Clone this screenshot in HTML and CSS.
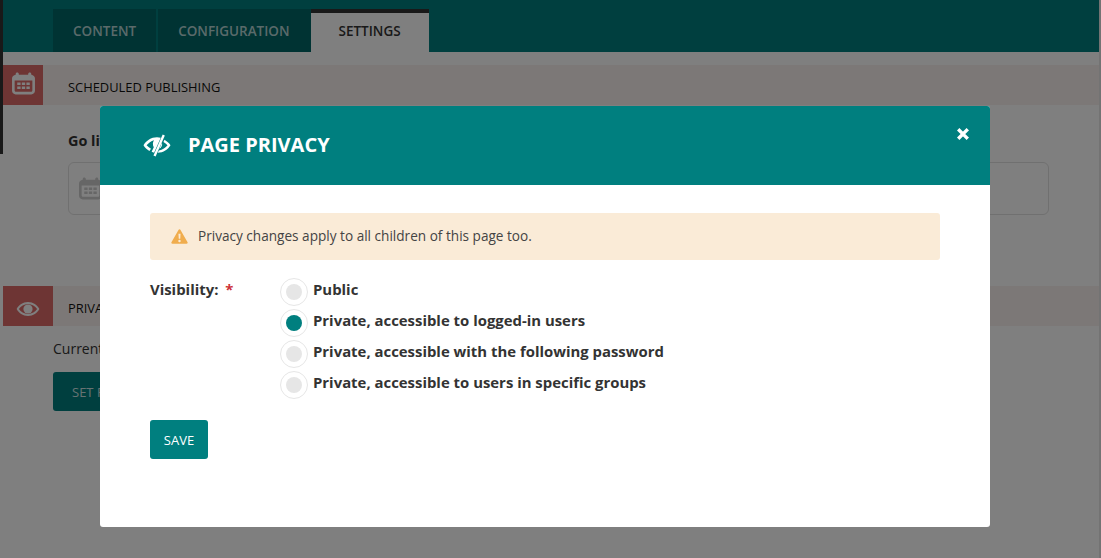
FILE: index.html
```html
<!DOCTYPE html>
<html lang="en">
<head>
    <meta charset="UTF-8">
    <title>Page Privacy</title>
    <link rel="stylesheet" href="styles.css">
</head>
<body>
    <div class="page">
        <div class="edge"><div class="edge-dark"></div></div>

        <div class="main">
            <!-- Tabs -->
            <div class="topbar">
                <a class="tab">CONTENT</a>
                <a class="tab tab-second">CONFIGURATION</a>
                <a class="tab active">SETTINGS</a>
            </div>

            <!-- Scheduled publishing -->
            <div class="section-head">
                <div class="section-icon">
                    <svg class="cal-icon" width="25" height="25" viewBox="0 0 24 24"><use href="#cal"></use></svg>
                </div>
                <span>SCHEDULED PUBLISHING</span>
            </div>
            <div class="schedule">
                <p class="go-live">Go live date/time</p>
                <div class="date-input">
                    <svg width="25" height="25" viewBox="0 0 24 24"><use href="#cal"></use></svg>
                </div>
            </div>

            <!-- Privacy -->
            <div class="section-head">
                <div class="section-icon section-icon-wide">
                    <svg class="eye-icon" width="24" height="16" viewBox="0 0 24 16">
                        <path fill-rule="evenodd" d="M12 1C6.800 1 2.800 4.200.6 8c2.200 3.800 6.200 7 11.400 7s9.200-3.200 11.400-7C21.200 4.200 17.200 1 12 1zM12 3c4 0 7.200 2.200 9.100 5-1.900 2.800-5.100 5-9.100 5s-7.200-2.200-9.100-5C4.800 5.200 8 3 12 3z"/>
                        <circle cx="12" cy="8" r="4.600"/>
                    </svg>
                </div>
                <span>PRIVACY</span>
            </div>
            <div class="privacy">
                <p class="current">Currently public</p>
                <a class="btn-dim">SET PRIVACY</a>
            </div>
        </div>

        <div class="right-edge"></div>
    </div>

    <div class="overlay"></div>

    <div class="modal">
        <div class="modal-head">
            <svg class="head-icon" width="30" height="26" viewBox="0 0 28 24">
                <path d="M17.500 5.300C16.400 5 15.200 4.800 14 4.800 8.500 4.800 4 8 1.400 12.300c1.300 2.200 3.200 4.100 5.500 5.400l1.500-2.300C6.700 14.500 5.300 13.500 4.300 12.300 6 10 8.500 8.200 11.300 7.500 9.900 9.300 9.800 11.800 11 14.200l-2 4.100 2.300.9z" fill="#fff"/>
                <path d="M20.300 2.700 11.700 22.300" stroke="#fff" stroke-width="2.200" fill="none"/>
                <path d="M21 7.200c2.300 1.300 4.200 3 5.600 5.100-2.400 3.800-6.500 7-12 7l1.200-2.200c3.500-.4 6.200-2.400 8-4.800-1-1.300-2.400-2.400-3.800-3.200z" fill="#fff"/>
                <path d="M18.600 9.800c.6 2.400-.4 4.600-2.400 5.600z" fill="#fff"/>
            </svg>
            <h2>PAGE PRIVACY</h2>
            <svg class="close" width="12" height="12" viewBox="0 0 12 12">
                <path d="M2.400 2.400 9.600 9.600M9.600 2.400 2.400 9.600" stroke="#fff" stroke-width="3.400" stroke-linecap="square"/>
            </svg>
        </div>
        <div class="modal-body">
            <div class="notice">
                <svg width="17" height="15" viewBox="0 0 18 16">
                    <path fill="#f0ad4e" fill-rule="evenodd" d="M9 .3c.5 0 .9.300 1.100.7l7.500 13c.4.700-.1 1.600-1 1.600H1.400c-.9 0-1.400-.900-1-1.600l7.500-13C8.100.6 8.500.3 9 .3zM7.900 5l.3 5.500h1.600L10.100 5zM9 11.500a1.300 1.300 0 1 0 0 2.600 1.300 1.300 0 0 0 0-2.600z"/>
                </svg>
                <span>Privacy changes apply to all children of this page too.</span>
            </div>

            <div class="field">
                <div class="field-label">Visibility: <span class="req">*</span></div>
                <div class="radios">
                    <div class="radio-row"><span class="radio"></span><span>Public</span></div>
                    <div class="radio-row"><span class="radio checked"></span><span>Private, accessible to logged-in users</span></div>
                    <div class="radio-row"><span class="radio"></span><span>Private, accessible with the following password</span></div>
                    <div class="radio-row"><span class="radio"></span><span>Private, accessible to users in specific groups</span></div>
                </div>
            </div>

            <button class="save">SAVE</button>
        </div>
    </div>

    <svg width="0" height="0" class="defs">
        <symbol id="cal" viewBox="0 0 24 24">
            <path fill-rule="evenodd" d="M6 1.500c.9 0 1.500.6 1.500 1.500v.5h9V3c0-.9.6-1.500 1.500-1.500s1.500.6 1.500 1.500v.6c1.900.3 3.500 1.500 3.500 3.400v12c0 2-1.600 3.500-3.500 3.500h-15C2.600 22.500 1 21 1 19V7c0-1.900 1.600-3.100 3.500-3.400V3C4.500 2.100 5.100 1.500 6 1.500zM3.500 9v9.500c0 .9.600 1.500 1.500 1.500h14c.9 0 1.500-.6 1.500-1.500V9zM6 11h3.200v2.500H6zM10.400 11h3.200v2.500h-3.200zM14.800 11H18v2.500h-3.200zM6 14.800h3.200v2.500H6zM10.400 14.800h3.200v2.500h-3.200zM14.800 14.800H18v2.500h-3.200z"/>
        </symbol>
    </svg>
</body>
</html>
```

FILE: styles.css
```css
* {
    margin: 0;
    padding: 0;
    box-sizing: border-box;
}

html, body {
    height: 558px;
    overflow: hidden;
}

body {
    font-family: 'Open Sans', sans-serif;
    background: #fff;
    color: #333;
}

.page {
    display: flex;
    height: 558px;
}

.edge {
    width: 3px;
    background: #fff;
}

.edge-dark {
    height: 154px;
    background: #333;
}

.right-edge {
    width: 2px;
    background: #e6e6e6;
}

.main {
    flex: 1;
    background: #fff;
}

.topbar {
    display: flex;
    align-items: flex-end;
    height: 52px;
    padding-left: 50px;
    background: #007f7f;
    margin-bottom: 13px;
}

.tab {
    height: 43px;
    line-height: 45px;
    padding: 0 20px;
    font-size: 13.5px;
    font-weight: 600;
    color: #b5d5d5;
    background: #006666;
    margin-right: 2px;
}

.tab-second {
    margin-right: 0;
    padding-right: 21px;
}

.tab.active {
    height: 43px;
    padding: 0 28px;
    margin-right: 0;
    color: #333;
    background: #fff;
    border-top: 4px solid #333;
    line-height: 37px;
}

.section-head {
    display: flex;
    align-items: center;
    height: 40px;
    background: #f8f1ef;
    font-size: 12.9px;
    color: #111;
}

.section-head span {
    padding-top: 3px;
}

.section-icon {
    display: flex;
    align-items: center;
    justify-content: center;
    width: 40px;
    height: 40px;
    margin-right: 25px;
    background: #dd6b68;
    fill: #fff;
}

.section-icon-wide {
    width: 50px;
    margin-right: 15px;
}

.cal-icon {
    margin-bottom: 3px;
}

.eye-icon {
    margin-top: 5px;
}

.schedule {
    height: 181px;
    padding: 26px 0 0 65px;
}

.go-live {
    font-size: 14.4px;
    font-weight: 700;
    line-height: 20px;
    margin-bottom: 11px;
}

.date-input {
    display: flex;
    align-items: center;
    width: 981px;
    height: 53px;
    padding-left: 9px;
    border: 1px solid #e0e0e0;
    border-radius: 6px;
    fill: #ccc;
}

.privacy {
    padding: 13px 0 0 50px;
}

.current {
    font-size: 14px;
    line-height: 19px;
    margin-bottom: 14px;
}

.btn-dim {
    display: block;
    width: 120px;
    height: 39px;
    line-height: 40px;
    padding-left: 19px;
    font-size: 13px;
    color: #cfe5e5;
    background: #007f7f;
    border-radius: 3px;
}

.overlay {
    position: fixed;
    top: 0;
    left: 0;
    right: 0;
    bottom: 0;
    background: rgba(0, 0, 0, 0.5);
}

.modal {
    position: fixed;
    top: 106px;
    left: 100px;
    width: 890px;
    height: 421px;
    background: #fff;
    border-radius: 3px;
    overflow: hidden;
}

.modal-head {
    position: relative;
    display: flex;
    align-items: center;
    height: 79px;
    padding-left: 42px;
    background: #007f7f;
}

.head-icon {
    margin-right: 16px;
    margin-bottom: 1px;
}

.modal-head h2 {
    font-size: 20px;
    font-weight: 700;
    color: #fff;
    margin-bottom: 2px;
}

.close {
    position: absolute;
    top: 22px;
    right: 21px;
}

.modal-body {
    padding: 28px 50px 0;
}

.notice {
    display: flex;
    align-items: center;
    height: 47px;
    padding-left: 21px;
    background: #faebd7;
    border-radius: 3px;
    font-size: 13.6px;
    color: #444;
}

.notice span {
    margin-bottom: 2px;
}

.notice svg {
    margin-right: 10px;
}

.field {
    display: flex;
    margin-top: 18px;
}

.field-label {
    width: 130px;
    font-size: 14.9px;
    font-weight: 700;
    line-height: 22px;
}

.req {
    color: #cd3238;
    margin-left: 3px;
}

.radios {
    display: flex;
    flex-direction: column;
    gap: 3px;
}

.radio-row {
    display: flex;
    align-items: flex-start;
    height: 28px;
    font-size: 14.9px;
    font-weight: 700;
    line-height: 22px;
}

.radio {
    flex: none;
    width: 28px;
    height: 28px;
    margin-right: 5px;
    border: 1px solid #e6e6e6;
    border-radius: 50%;
    background: #fff;
    display: flex;
    align-items: center;
    justify-content: center;
}

.radio::after {
    content: "";
    width: 16px;
    height: 16px;
    border-radius: 50%;
    background: #e6e6e6;
}

.radio.checked::after {
    background: #007f7f;
}

.save {
    display: block;
    width: 58px;
    height: 39px;
    margin-top: 21px;
    border: none;
    border-radius: 3px;
    background: #007f7f;
    color: #fff;
    font-family: 'Open Sans', sans-serif;
    font-size: 13px;
}

.defs {
    position: absolute;
}
```
